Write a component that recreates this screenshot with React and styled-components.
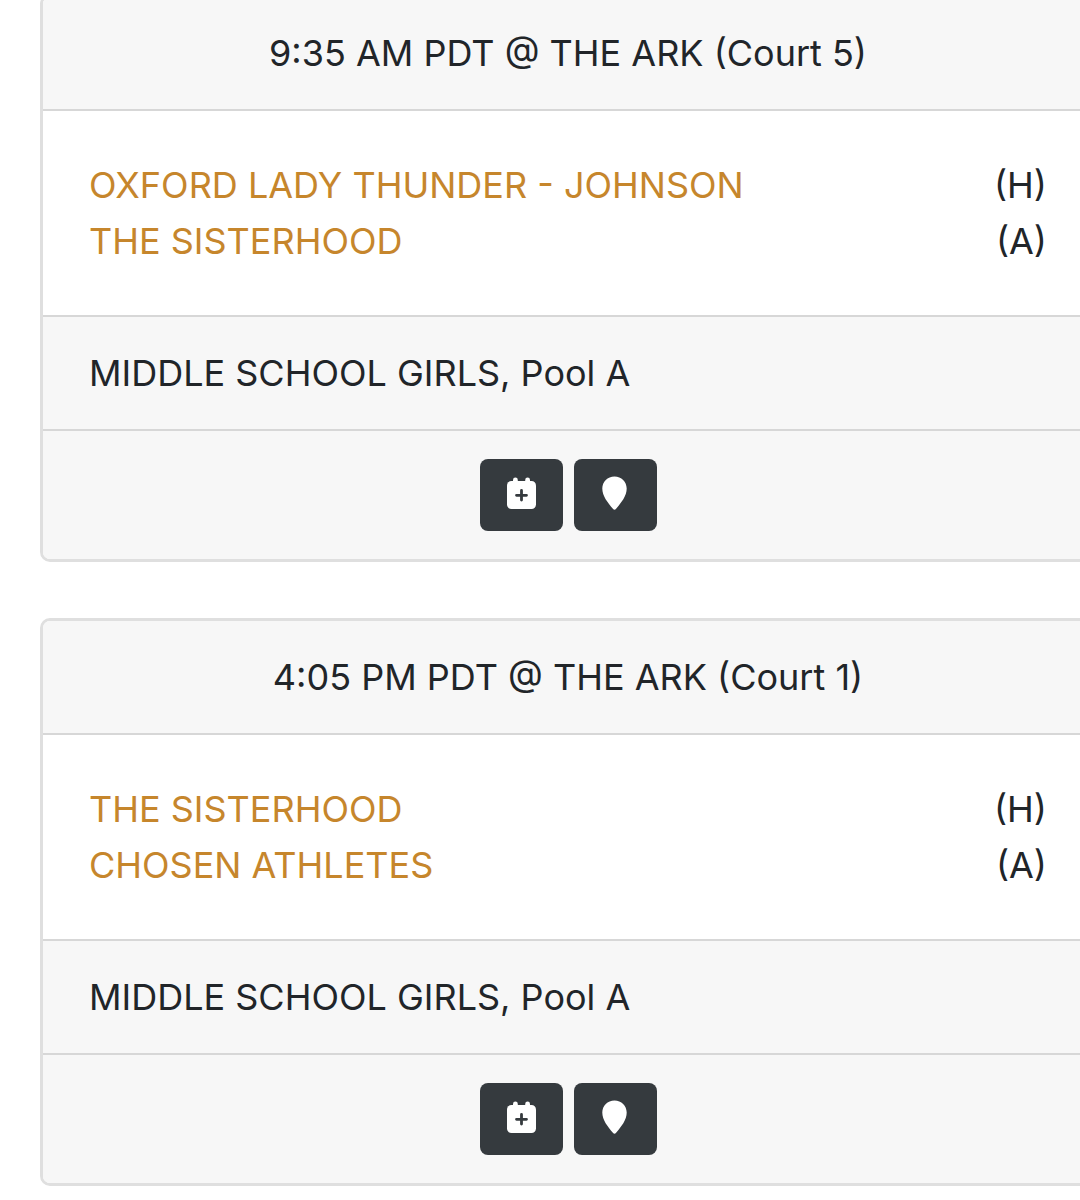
import React from "react";
import styled, { createGlobalStyle } from "styled-components";

const GlobalStyle = createGlobalStyle`
  *, *::before, *::after { box-sizing: border-box; }
  body {
    margin: 0;
    background: #fff;
    color: #212529;
    font-family: Inter, "Liberation Sans", sans-serif;
    font-size: 36px;
    line-height: 56px;
  }
`;

const Page = styled.main`
  overflow: hidden;
`;

/* The list bleeds past the top and right edges of the page. */
const GameList = styled.div`
  display: flex;
  flex-direction: column;
  gap: 56px;
  margin: -6px -16px 0 40px;
  padding-bottom: 14px;
`;

const Card = styled.article`
  border: 3px solid #dfdfdf;
  border-radius: 10px;
  background: #fff;
  overflow: hidden;
`;

const CardHeader = styled.header`
  padding: 28px 46px;
  background: #f7f7f7;
  border-bottom: 2px solid #d7d7d7;
  text-align: center;
`;

const Teams = styled.div`
  padding: 46px;
`;

const TeamRow = styled.div`
  display: flex;
  justify-content: space-between;
`;

const TeamLink = styled.a`
  color: #c6862c;
  text-decoration: none;
`;

const CardFooter = styled.footer`
  display: flex;
  justify-content: ${(p) => (p.$centered ? "center" : "flex-start")};
  gap: 11px;
  padding: 28px 46px;
  background: #f7f7f7;
  border-top: 2px solid #d7d7d7;
`;

const IconButton = styled.button`
  display: flex;
  align-items: center;
  justify-content: center;
  width: 83px;
  height: 72px;
  padding: 0 0 4px;
  border: 0;
  border-radius: 8px;
  background: #353a3e;
  color: #fff;
  cursor: pointer;
`;

const CalendarPlus = () => (
  <svg width="29" height="32" viewBox="0 0 29 32" fill="currentColor" aria-hidden="true">
    <rect x="0" y="4" width="29" height="28" rx="4.5" />
    <rect x="6" y="0.5" width="4.8" height="8" rx="2.4" />
    <rect x="18.2" y="0.5" width="4.8" height="8" rx="2.4" />
    <path d="M14.5 13.5v9.600M9.500 18.300h10" stroke="#353a3e" strokeWidth="2.8" strokeLinecap="round" />
  </svg>
);

const MapPin = () => (
  <svg width="26" height="34" viewBox="0 0 26 34" fill="currentColor" aria-hidden="true">
    <path d="M12.5 0.5C5.6 0.5 0.3 5.8 0.3 12.6c0 7.4 5.4 14.2 10.6 20.2a2.1 2.1 0 0 0 3.2 0c5.2-6 10.6-12.8 10.6-20.2C24.7 5.8 19.4 0.5 12.5 0.5z" />
  </svg>
);

const games = [
  {
    title: "9:35 AM PDT @ THE ARK (Court 5)",
    home: "OXFORD LADY THUNDER - JOHNSON",
    away: "THE SISTERHOOD",
    division: "MIDDLE SCHOOL GIRLS, Pool A",
  },
  {
    title: "4:05 PM PDT @ THE ARK (Court 1)",
    home: "THE SISTERHOOD",
    away: "CHOSEN ATHLETES",
    division: "MIDDLE SCHOOL GIRLS, Pool A",
  },
];

const GameCard = ({ game }) => (
  <Card>
    <CardHeader>{game.title}</CardHeader>
    <Teams>
      <TeamRow>
        <TeamLink href="#">{game.home}</TeamLink>
        <span>(H)</span>
      </TeamRow>
      <TeamRow>
        <TeamLink href="#">{game.away}</TeamLink>
        <span>(A)</span>
      </TeamRow>
    </Teams>
    <CardFooter>{game.division}</CardFooter>
    <CardFooter $centered>
      <IconButton type="button" aria-label="Add to calendar">
        <CalendarPlus />
      </IconButton>
      <IconButton type="button" aria-label="View location">
        <MapPin />
      </IconButton>
    </CardFooter>
  </Card>
);

export default function App() {
  return (
    <>
      <GlobalStyle />
      <Page>
        <GameList>
          {games.map((game) => (
            <GameCard key={game.title} game={game} />
          ))}
        </GameList>
      </Page>
    </>
  );
}
